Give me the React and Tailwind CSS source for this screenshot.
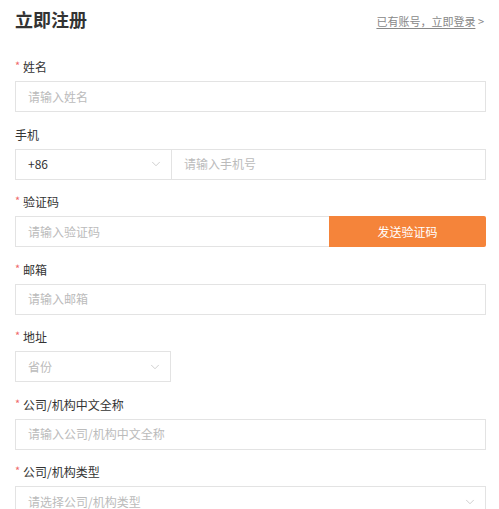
import { ChevronDown } from 'lucide-react'

const font = { fontFamily: '"Noto Sans CJK SC", "Noto Sans", sans-serif' }

const Label = ({ children, required = true }) => (
    <div className="flex items-center h-5 text-[12px] text-[#333] mb-1">
        {required && <span className="text-[#f0686b] w-2 text-[11px] leading-none mt-[-3px]">*</span>}
        {children}
    </div>
)

const Placeholder = ({ children }) => (
    <span className="text-[12px] text-[#bbb]">{children}</span>
)

const Field = ({ label, required, children }) => (
    <div className="mb-[12.5px]">
        <Label required={required}>{label}</Label>
        {children}
    </div>
)

const Input = ({ placeholder }) => (
    <div className="flex items-center h-[31px] border border-[#e3e3e3] px-3">
        <Placeholder>{placeholder}</Placeholder>
    </div>
)

const Chevron = () => <ChevronDown size={14} strokeWidth={1.2} className="text-[#bbb]" />

export default function App() {
    return (
        <div style={font} className="w-[499px] h-[509px] overflow-hidden bg-white pl-[15px] pr-[13px]">
            <div className="flex items-center justify-between h-[37px] pt-[1px]">
                <h1 className="text-[18px] font-bold text-[#333]">立即注册</h1>
                <span className="text-[11px] text-[#888] mt-[5px] mr-[2px]">
                    <span className="underline underline-offset-2">已有账号，立即登录</span> &gt;
                </span>
            </div>
            <div className="pt-[20px]">
                <Field label="姓名">
                    <Input placeholder="请输入姓名" />
                </Field>
                <Field label="手机" required={false}>
                    <div className="flex h-[31px] border border-[#e3e3e3]">
                        <div className="w-[156px] flex items-center justify-between pl-3 pr-2 border-r border-[#e3e3e3] text-[12px] text-[#333]">
                            <span>+86</span>
                            <Chevron />
                        </div>
                        <div className="flex-1 flex items-center px-3">
                            <Placeholder>请输入手机号</Placeholder>
                        </div>
                    </div>
                </Field>
                <Field label="验证码">
                    <div className="flex h-[31px]">
                        <div className="flex-1 flex items-center px-3 border border-[#e3e3e3] border-r-0">
                            <Placeholder>请输入验证码</Placeholder>
                        </div>
                        <button className="w-[157px] bg-[#f5843a] text-white text-[12px] rounded-r-[2px]">发送验证码</button>
                    </div>
                </Field>
                <Field label="邮箱">
                    <Input placeholder="请输入邮箱" />
                </Field>
                <Field label="地址">
                    <div className="w-[156px] h-[31px] flex items-center justify-between border border-[#e3e3e3] pl-3 pr-2">
                        <Placeholder>省份</Placeholder>
                        <Chevron />
                    </div>
                </Field>
                <Field label="公司/机构中文全称">
                    <Input placeholder="请输入公司/机构中文全称" />
                </Field>
                <Field label="公司/机构类型">
                    <div className="h-[31px] flex items-center justify-between border border-[#e3e3e3] pl-3 pr-2">
                        <Placeholder>请选择公司/机构类型</Placeholder>
                        <Chevron />
                    </div>
                </Field>
            </div>
        </div>
    )
}
